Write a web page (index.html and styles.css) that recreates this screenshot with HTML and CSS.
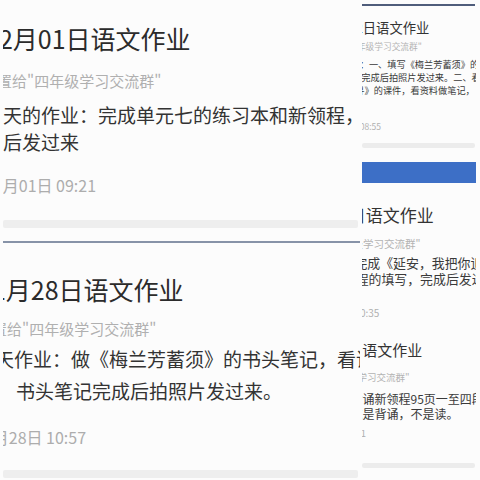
FILE: index.html
```html
<!DOCTYPE html>
<html lang="zh-CN">
<head>
<meta charset="utf-8">
<title>语文作业</title>
<link rel="stylesheet" href="styles.css">
</head>
<body>
<div class="collage">
  <section class="pane pane-left">
    <article class="card card-a">
      <h2 class="l-title t-a">12月01日语文作业</h2>
      <p class="l-sub s-a">布置给"四年级学习交流群"</p>
      <p class="l-body b-a">
        <span class="ln">今天的作业：完成单元七的练习本和新领程，拍</span>
        <span class="ln">照后发过来</span>
      </p>
      <p class="l-time m-a">12月01日 09:21</p>
      <div class="band band-a"></div>
    </article>
    <div class="rule"></div>
    <article class="card card-b">
      <h2 class="l-title t-b">11月28日语文作业</h2>
      <p class="l-sub s-b">布置给"四年级学习交流群"</p>
      <p class="l-body b-b">
        <span class="ln ln-b-1">今天作业：做《梅兰芳蓄须》的书头笔记，看课件</span>
        <span class="ln ln-in">书头笔记完成后拍照片发过来。</span>
      </p>
      <p class="l-time m-b">11月28日 10:57</p>
      <div class="band band-b"></div>
    </article>
  </section>

  <section class="pane pane-right">
    <div class="r-rule"></div>
    <article class="mini mini-a">
      <h3 class="r-title rt-a">12月02日语文作业</h3>
      <p class="r-sub rs-a">布置给"四年级学习交流群"</p>
      <p class="r-body rb-a">
        <span class="ln ln-a1">今天作业：一、填写《梅兰芳蓄须》的书头笔记</span>
        <span class="ln ln-a2">记，完成后拍照片发过来。二、看课件</span>
        <span class="ln ln-a3">你追寻》的课件，看资料做笔记，</span>
      </p>
      <p class="r-time rm-a">12月02日 08:55</p>
      <div class="r-band band-ra"></div>
    </article>

    <div class="blue-bar"></div>

    <article class="mini mini-b">
      <h3 class="r-title rt-b">12月03日语文作业</h3>
      <p class="r-sub rs-b">布置给"四年级学习交流群"</p>
      <p class="r-body rb-b">
        <span class="ln ln-b1">今天作业：完成《延安，我把你追寻》</span>
        <span class="ln ln-b2">课新领程的填写，完成后发过来</span>
      </p>
      <p class="r-time rm-b">12月03日 20:35</p>
    </article>

    <article class="mini mini-c">
      <h3 class="r-title rt-c">12月04日语文作业</h3>
      <p class="r-sub rs-c">布置给"四年级学习交流群"</p>
      <p class="r-body rb-c">
        <span class="ln ln-c1">今天作业：背诵新领程95页一至四段，</span>
        <span class="ln ln-c2">要求是背诵，不是读。</span>
      </p>
      <p class="r-time rm-c">12月04日 20:31</p>
      <div class="r-band band-rc"></div>
    </article>
  </section>
</div>
</body>
</html>
```

FILE: styles.css
```css
* {
  box-sizing: border-box;
}

html, body {
  margin: 0;
  padding: 0;
  background: #fcfcfc;
}

body {
  font-family: "Noto Sans CJK SC", "Noto Sans", sans-serif;
  color: #2e2e2e;
}

h2, h3, p {
  margin: 0;
  font-weight: 400;
  white-space: nowrap;
}

.ln {
  display: block;
  white-space: nowrap;
}

.collage {
  width: 480px;
  height: 480px;
  display: flex;
  overflow: hidden;
}

.pane {
  overflow: hidden;
  display: flex;
  flex-direction: column;
  flex: none;
}

/* ---------- large cards ---------- */
.pane-left {
  margin-left: 3px;
  width: 357px;
  height: 480px;
}

.card {
  display: flex;
  flex-direction: column;
  flex: none;
}

.l-title {
  font-size: 25px;
  line-height: 34px;
  color: #2b2b2b;
}

.l-sub {
  font-size: 15px;
  line-height: 20px;
  color: #b0b0b0;
}

.l-body {
  font-size: 19px;
  color: #333;
}

.l-time {
  font-size: 16px;
  line-height: 22px;
  color: #adadad;
}

.band {
  height: 8px;
  width: 355px;
  background: #eeeeee;
  border-radius: 2px;
}

.rule {
  height: 2px;
  margin-top: 13px;
  background: #8793a8;
  flex: none;
}

.t-a { margin: 21px 0 0 -18px; }
.s-a { margin: 16px 0 0 -21px; }
.b-a { margin: 10px 0 0 -19px; line-height: 27px; }
.m-a { margin: 19px 0 0 -18px; }
.band-a { margin-top: 24px; }

.t-b { margin: 29px 0 0 -25px; }
.s-b { margin: 13px 0 0 -26px; }
.b-b { margin: 4px 0 0 -29px; line-height: 32px; }
.ln-b-1 { margin-left: 2px; }
.ln-in { padding-left: 42px; }
.m-b { margin: 19px 0 0 -28px; }
.band-b { margin-top: 22px; }

/* ---------- small cards ---------- */
.pane-right {
  margin-left: 2px;
  width: 114px;
  height: 480px;
}

.mini {
  display: flex;
  flex-direction: column;
  flex: none;
}

.r-rule {
  height: 2px;
  margin-top: 4px;
  width: 113px;
  background: #4f5d7b;
  flex: none;
}

.r-title {
  color: #333;
}

.r-sub {
  color: #b3b3b3;
}

.r-body {
  color: #3a3a3a;
}

.r-time {
  color: #b0b0b0;
}

.r-band {
  height: 5px;
  width: 113px;
  background: #ececec;
  border-radius: 2px;
}

.rt-a { font-size: 13.3px; line-height: 18px; margin: 12.5px 0 0 -42px; }
.rs-a { font-size: 8.7px; line-height: 12px; margin: 4.5px 0 0 -44px; }
.rb-a { font-size: 9.2px; line-height: 13px; margin-top: 4.5px; }
.ln-a1 { margin-left: -39px; }
.ln-a2 { margin-left: -19px; }
.ln-a3 { margin-left: -25px; }
.rm-a { font-size: 8.5px; line-height: 12px; margin: 23.5px 0 0 -40px; }
.band-ra { margin-top: 11px; }

.blue-bar {
  height: 21px;
  margin-top: 14px;
  background: #3d6fc6;
  flex: none;
}

.rt-b { font-size: 17px; line-height: 22px; margin: 21px 0 0 -68px; }
.rs-b { font-size: 10.5px; line-height: 14px; margin: 11px 0 0 -67px; }
.rb-b { font-size: 12.9px; line-height: 16px; margin-top: 4px; }
.ln-b1 { margin-left: -72px; }
.ln-b2 { margin-left: -45px; }
.rm-b { font-size: 10px; line-height: 12px; margin: 20px 0 0 -52px; }

.rt-c { font-size: 15px; line-height: 20px; margin: 21px 0 0 -63px; }
.rs-c { font-size: 9.5px; line-height: 12px; margin: 11px 0 0 -66px; }
.rb-c { font-size: 12px; line-height: 15px; margin-top: 7.5px; }
.ln-c1 { margin-left: -71.5px; }
.ln-c2 { margin-left: -23.5px; }
.rm-c { font-size: 9.5px; line-height: 12px; margin: 6.5px 0 0 -62px; }
.band-rc { margin-top: 24px; }
```
